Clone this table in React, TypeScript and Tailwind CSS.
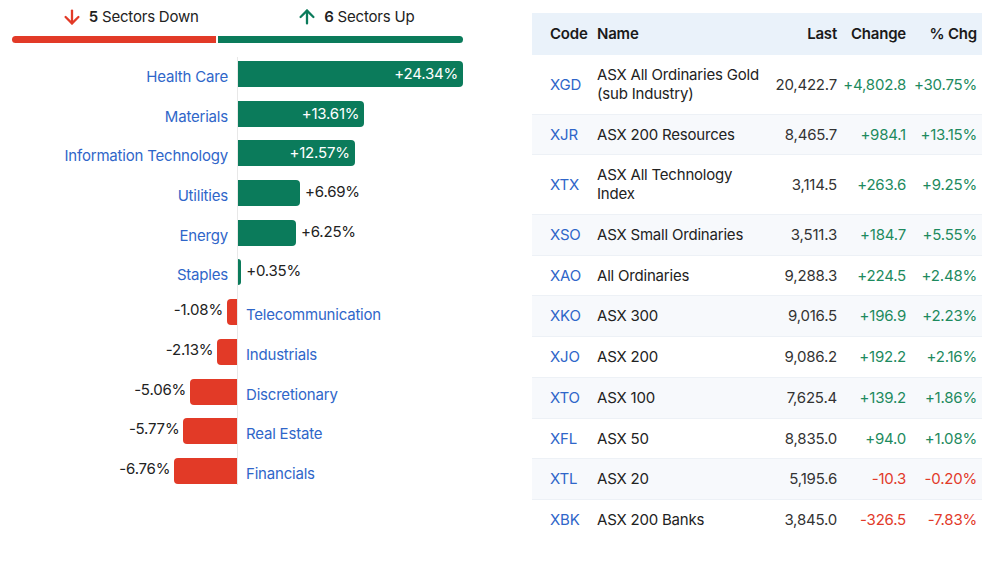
import { ArrowDown, ArrowUp } from "lucide-react";

const sectors = [
  { name: "Health Care", pct: 24.34 },
  { name: "Materials", pct: 13.61 },
  { name: "Information Technology", pct: 12.57 },
  { name: "Utilities", pct: 6.69 },
  { name: "Energy", pct: 6.25 },
  { name: "Staples", pct: 0.35 },
  { name: "Telecommunication", pct: -1.08 },
  { name: "Industrials", pct: -2.13 },
  { name: "Discretionary", pct: -5.06 },
  { name: "Real Estate", pct: -5.77 },
  { name: "Financials", pct: -6.76 },
];

const indices = [
  { code: "XGD", name: "ASX All Ordinaries Gold (sub Industry)", last: "20,422.7", chg: "+4,802.8", pct: "+30.75%" },
  { code: "XJR", name: "ASX 200 Resources", last: "8,465.7", chg: "+984.1", pct: "+13.15%" },
  { code: "XTX", name: "ASX All Technology Index", last: "3,114.5", chg: "+263.6", pct: "+9.25%" },
  { code: "XSO", name: "ASX Small Ordinaries", last: "3,511.3", chg: "+184.7", pct: "+5.55%" },
  { code: "XAO", name: "All Ordinaries", last: "9,288.3", chg: "+224.5", pct: "+2.48%" },
  { code: "XKO", name: "ASX 300", last: "9,016.5", chg: "+196.9", pct: "+2.23%" },
  { code: "XJO", name: "ASX 200", last: "9,086.2", chg: "+192.2", pct: "+2.16%" },
  { code: "XTO", name: "ASX 100", last: "7,625.4", chg: "+139.2", pct: "+1.86%" },
  { code: "XFL", name: "ASX 50", last: "8,835.0", chg: "+94.0", pct: "+1.08%" },
  { code: "XTL", name: "ASX 20", last: "5,195.6", chg: "-10.3", pct: "-0.20%" },
  { code: "XBK", name: "ASX 200 Banks", last: "3,845.0", chg: "-326.5", pct: "-7.83%" },
];

// px per percent point, widest bar fills the right half
const scale = 226 / 24.34;

function fmt(p: number) {
  return (p > 0 ? "+" : "") + p.toFixed(2) + "%";
}

function SectorRow({ name, pct, last }: { name: string; pct: number; last?: boolean }) {
  const w = Math.max(Math.abs(pct) * scale, 3);
  const inside = w > 80;
  const h = last ? "h-[27px]" : "h-[39.7px]";

  if (pct >= 0) {
    return (
      <div className={`flex ${h}`}>
        <div className="w-[225px] flex justify-end pr-[9px]">
          <a className="mt-[6px] leading-[20px] text-[#2f66c9]">{name}</a>
        </div>
        <div className="w-[226px] flex items-start border-l border-[#e8e8e8]">
          <div
            className="h-[26px] bg-[#0b7b5b] rounded-r-[4px] flex items-center justify-end"
            style={{ width: w }}
          >
            {inside && <span className="pr-[5px] leading-[20px] text-white">{fmt(pct)}</span>}
          </div>
          {!inside && <span className="pl-[5px] mt-[2px] leading-[20px] text-[#222]">{fmt(pct)}</span>}
        </div>
      </div>
    );
  }

  return (
    <div className={`flex ${h}`}>
      <div className="w-[225px] flex justify-end items-start">
        <span className="pr-[4px] mt-[1px] leading-[20px] text-[#222]">{fmt(pct)}</span>
        <div className="h-[26px] bg-[#e23a27] rounded-l-[4px]" style={{ width: w }} />
      </div>
      <div className="w-[226px] border-l border-[#e8e8e8] pl-[8px]">
        <a className="block mt-[6px] leading-[20px] text-[#2f66c9]">{name}</a>
      </div>
    </div>
  );
}

export default function App() {
  const down = sectors.filter((s) => s.pct < 0).length;
  const up = sectors.length - down;

  return (
    <div className="w-[1000px] h-[584px] bg-white flex gap-[69px] pl-[12px] text-[15px] tracking-[-0.2px] text-[#222] font-['Inter',sans-serif]">
      <div className="w-[451px]">
        <div className="flex pt-[6px]">
          <div className="flex-1 flex justify-center items-center pl-[10px] leading-[22px]">
            <ArrowDown size={22} strokeWidth={2.5} className="text-[#e23a27]" />
            <span className="ml-[6px]">
              <b className="font-semibold">{down}</b> Sectors Down
            </span>
          </div>
          <div className="flex-1 flex justify-center items-center pl-[10px] leading-[22px]">
            <ArrowUp size={22} strokeWidth={2.5} className="text-[#0b7b5b]" />
            <span className="ml-[6px]">
              <b className="font-semibold">{up}</b> Sectors Up
            </span>
          </div>
        </div>
        <div className="flex gap-[2px] mt-[8px] h-[7px]">
          <div className="bg-[#e23a27] rounded-l-full" style={{ flex: down }} />
          <div className="bg-[#0b7b5b] rounded-r-full" style={{ flex: up }} />
        </div>
        <div className="mt-[14px] flex flex-col">
          <div className="flex h-[4px]">
            <div className="w-[225px]" />
            <div className="border-l border-[#e8e8e8]" />
          </div>
          {sectors.map((s, i) => (
            <SectorRow key={s.name} name={s.name} pct={s.pct} last={i === sectors.length - 1} />
          ))}
        </div>
      </div>

      <div className="mt-[13px] w-[450px]">
        <table className="w-[450px] table-fixed border-collapse">
          <colgroup>
            <col className="w-[65px]" />
            <col className="w-[170px]" />
            <col className="w-[70px]" />
            <col className="w-[69px]" />
            <col className="w-[76px]" />
          </colgroup>
          <thead>
            <tr className="bg-[#eaf2fa] h-[42px] font-semibold text-[#1a1a1a]">
              <th className="pl-[18px] text-left font-semibold">Code</th>
              <th className="text-left font-semibold">Name</th>
              <th className="text-right font-semibold">Last</th>
              <th className="text-right font-semibold">Change</th>
              <th className="text-right pr-[5px] font-semibold">% Chg</th>
            </tr>
          </thead>
          <tbody className="leading-[19px]">
            {indices.map((r, i) => {
              const neg = r.chg.startsWith("-");
              const tone = neg ? "text-[#e23a2a]" : "text-[#1d8a5e]";
              const lastRow = i === indices.length - 1;
              return (
                <tr
                  key={r.code}
                  className={`${lastRow ? "" : "border-b border-[#edf1f6]"} ${i % 2 === 1 ? "bg-[#f7f9fc]" : "bg-white"}`}
                >
                  <td className="pl-[18px] pt-[10px] pb-[10.7px] text-[#2f66c9]">{r.code}</td>
                  <td className="pt-[10px] pb-[10.7px] text-[#222]">{r.name}</td>
                  <td className="pt-[10px] pb-[10.7px] text-right text-[#333]">{r.last}</td>
                  <td className={`pt-[10px] pb-[10.7px] text-right ${tone}`}>{r.chg}</td>
                  <td className={`pt-[10px] pb-[10.7px] pr-[5px] text-right ${tone}`}>{r.pct}</td>
                </tr>
              );
            })}
          </tbody>
        </table>
      </div>
    </div>
  );
}
